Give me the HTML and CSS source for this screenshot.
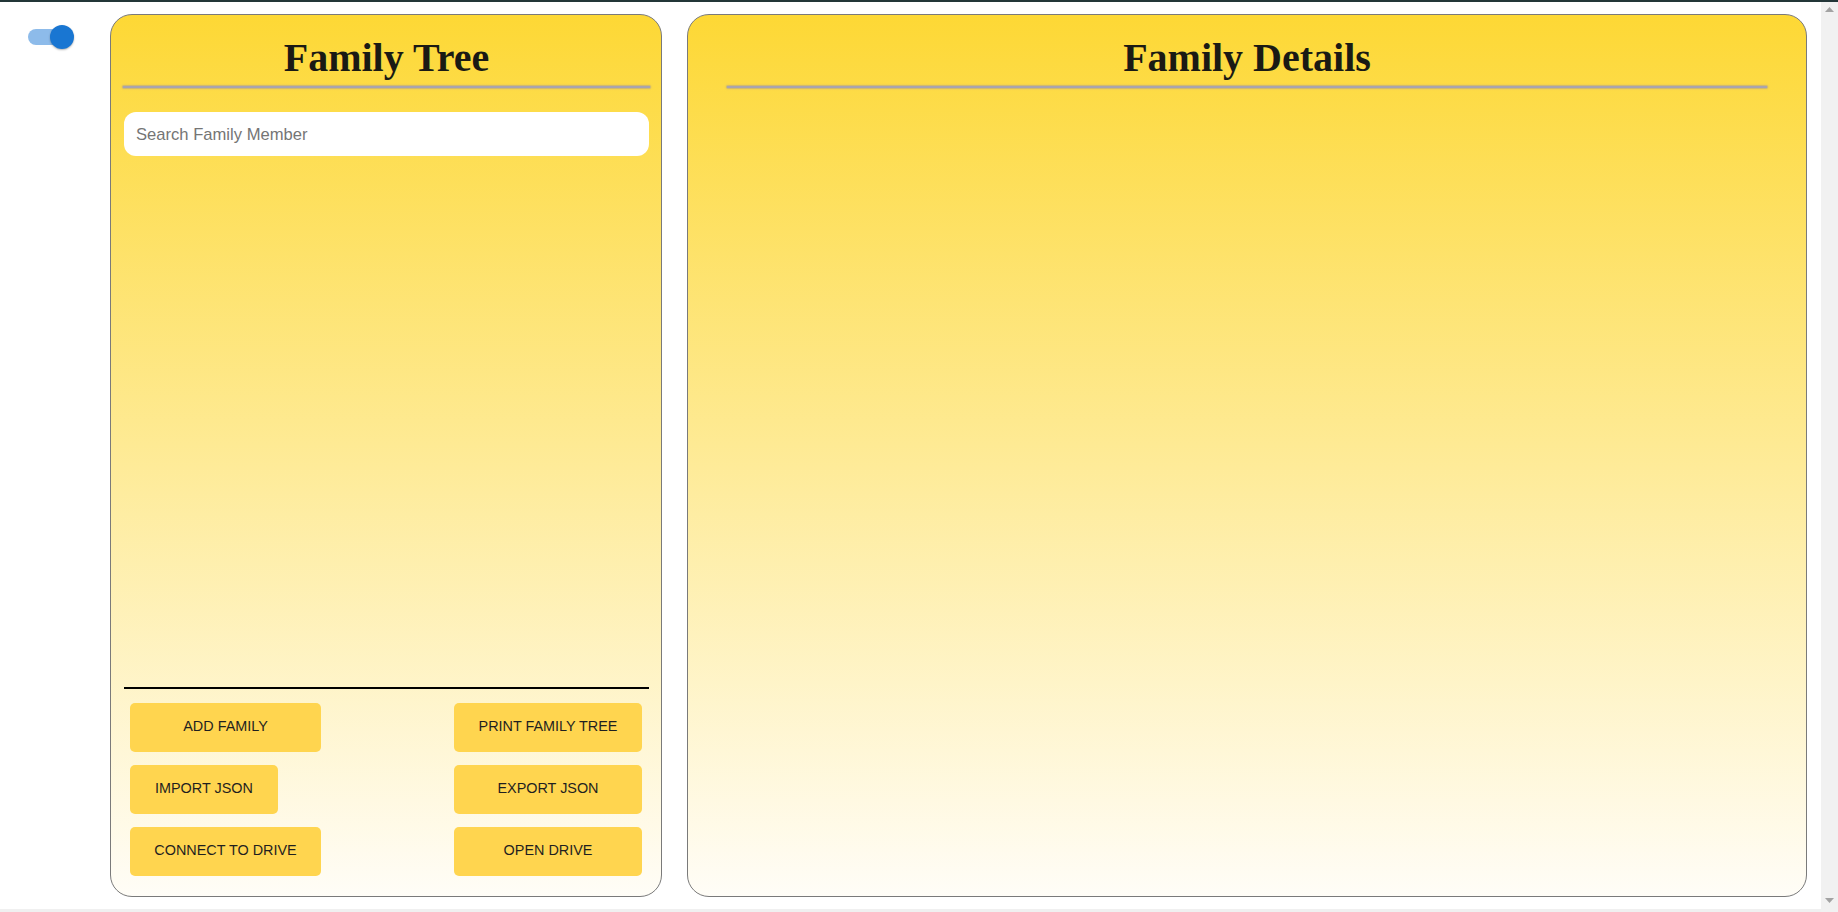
FILE: index.html
```html
<!DOCTYPE html>
<html lang="en">
<head>
<meta charset="utf-8">
<title>Family Tree</title>
<link rel="stylesheet" href="styles.css">
</head>
<body>
<div class="window">
  <div class="page">
    <div class="main">
      <div class="side">
        <div class="switch">
          <span class="switch-track"></span>
          <span class="switch-thumb"></span>
        </div>
      </div>
      <section class="card card-tree">
        <h2 class="card-title">Family Tree</h2>
        <div class="rule rule-tree"></div>
        <input class="search" type="text" placeholder="Search Family Member">
        <div class="tree-area"></div>
        <div class="divider"></div>
        <div class="actions">
          <button class="btn">ADD FAMILY</button>
          <button class="btn">PRINT FAMILY TREE</button>
          <button class="btn btn-auto">IMPORT JSON</button>
          <button class="btn">EXPORT JSON</button>
          <button class="btn">CONNECT TO DRIVE</button>
          <button class="btn">OPEN DRIVE</button>
        </div>
      </section>
      <section class="card card-details">
        <h2 class="card-title">Family Details</h2>
        <div class="rule rule-details"></div>
      </section>
    </div>
    <div class="hbar"></div>
  </div>
  <div class="vbar">
    <svg class="arrow" width="9" height="5" viewBox="0 0 9 5"><path d="M0 5 L4.5 0 L9 5 Z" fill="#a3a3a3"/></svg>
    <svg class="arrow" width="9" height="5" viewBox="0 0 9 5"><path d="M0 0 L4.5 5 L9 0 Z" fill="#a3a3a3"/></svg>
  </div>
</div>
</body>
</html>
```
FILE: styles.css
```css
html, body {
  margin: 0;
  padding: 0;
  height: 100%;
  overflow: hidden;
  background: #ffffff;
}
body {
  border-top: 2px solid #233638;
  box-sizing: border-box;
  font-family: "Liberation Sans", Arial, sans-serif;
}
.window {
  display: flex;
  height: 910px;
}
.page {
  flex: 1;
  display: flex;
  flex-direction: column;
}
.main {
  flex: 1;
  display: flex;
  padding: 12px 14px 12px 0;
  box-sizing: border-box;
}
.hbar {
  height: 3px;
  background: #f0f0f0;
}
.vbar {
  width: 17px;
  background: #f1f1f1;
  display: flex;
  flex-direction: column;
  align-items: center;
  justify-content: space-between;
  padding: 5px 0 9px;
  box-sizing: border-box;
}
.arrow { display: block; }

.side {
  width: 110px;
  flex: none;
}
.switch {
  position: relative;
  width: 46px;
  height: 24px;
  margin: 11px 0 0 28px;
}
.switch-track {
  position: absolute;
  left: 0;
  top: 4px;
  width: 40px;
  height: 16px;
  border-radius: 8px;
  background: #8dbbea;
}
.switch-thumb {
  position: absolute;
  right: 0;
  top: 0;
  width: 24px;
  height: 24px;
  border-radius: 50%;
  background: #1976d2;
  box-shadow: 0 1px 2px rgba(0,0,0,0.3);
}

.card {
  box-sizing: border-box;
  height: 883px;
  border: 1px solid #7a7a7a;
  border-radius: 22px;
  background: linear-gradient(to bottom, #fdd835 0%, #fffdf7 100%);
  display: flex;
  flex-direction: column;
}
.card-tree {
  width: 552px;
  flex: none;
  padding: 0 12px 20px 13px;
}
.card-details {
  flex: 1;
  margin-left: 25px;
  align-items: center;
}
.card-title {
  margin: 20px 0 5px;
  font-family: "Liberation Serif", "Times New Roman", serif;
  font-weight: bold;
  font-size: 40px;
  line-height: 46px;
  text-align: center;
  color: #1a1a14;
}
.rule {
  height: 2px;
  background: #a8a4ae;
  box-shadow: 0 0 1.5px 0.6px rgba(150,145,165,0.85);
}
.rule-tree {
  margin: 0 -1px;
}
.rule-details {
  width: 93%;
}
.search {
  margin-top: 24px;
  height: 44px;
  box-sizing: border-box;
  border: none;
  border-radius: 12px;
  background: #ffffff;
  padding: 1px 12px 0;
  font-family: "Liberation Sans", Arial, sans-serif;
  font-size: 16.6px;
  color: #222;
  outline: none;
}
.search::placeholder {
  color: #757575;
}
.tree-area {
  flex: 1;
}
.divider {
  height: 2px;
  background: #000;
}
.actions {
  margin-top: 14px;
  padding: 0 7px 0 6px;
  display: grid;
  grid-template-columns: 191px 188px;
  justify-content: space-between;
  row-gap: 13px;
}
.btn {
  height: 49px;
  border: none;
  border-radius: 5px;
  background: #ffd54f;
  font-family: "Liberation Sans", Arial, sans-serif;
  font-size: 14.4px;
  line-height: 1;
  color: #1f1f1f;
  padding: 0 0 3px;
  cursor: pointer;
}
.btn-auto {
  justify-self: start;
  padding: 0 25px 3px;
}
```
